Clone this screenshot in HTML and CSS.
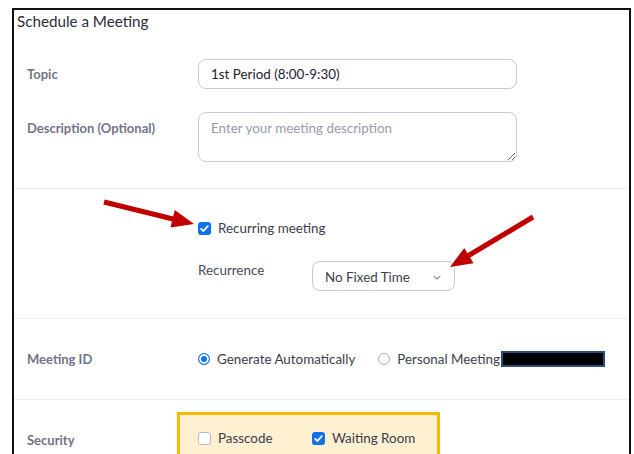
FILE: index.html
```html
<!DOCTYPE html>
<html lang="en">
<head>
<meta charset="utf-8">
<title>Schedule a Meeting</title>
<link rel="stylesheet" href="styles.css">
</head>
<body>
<div class="panel">
  <div class="title">Schedule a Meeting</div>

  <div class="section section-basic">
    <div class="row row-center">
      <div class="label">Topic</div>
      <div class="value"><input class="field" type="text" value="1st Period (8:00-9:30)"></div>
    </div>
    <div class="row row-top row-desc">
      <div class="label label-desc">Description (Optional)</div>
      <div class="value"><textarea class="field area" placeholder="Enter your meeting description"></textarea></div>
    </div>
  </div>

  <div class="section section-recur">
    <div class="row row-center">
      <div class="label"></div>
      <div class="value">
        <label class="check">
          <span class="box box-on"><svg viewBox="0 0 13 13" width="13" height="13"><path d="M3.2 6.8 L5.5 9 L9.8 4.2" fill="none" stroke="#fff" stroke-width="1.8" stroke-linecap="round" stroke-linejoin="round"/></svg></span>
          <span class="text">Recurring meeting</span>
        </label>
      </div>
    </div>
    <div class="row row-center row-recurrence">
      <div class="label"></div>
      <div class="value recur">
        <span class="sub-label">Recurrence</span>
        <div class="select">
          <span>No Fixed Time</span>
          <svg class="chev" viewBox="0 0 8 5" width="8" height="5"><path d="M0.7 0.8 L4 4 L7.3 0.8" fill="none" stroke="#8a8a99" stroke-width="1.1"/></svg>
        </div>
      </div>
    </div>
  </div>

  <div class="section section-id">
    <div class="row row-center">
      <div class="label">Meeting ID</div>
      <div class="value radios">
        <label class="radio-opt">
          <span class="radio radio-on"></span>
          <span class="text">Generate Automatically</span>
        </label>
        <label class="radio-opt">
          <span class="radio"></span>
          <span class="text">Personal Meeting</span><span class="masked"></span>
        </label>
      </div>
    </div>
  </div>

  <div class="section section-security">
    <div class="row row-center row-security">
      <div class="label">Security</div>
      <div class="value highlight">
        <label class="check">
          <span class="box"></span>
          <span class="text">Passcode</span>
        </label>
        <label class="check check-wait">
          <span class="box box-on"><svg viewBox="0 0 13 13" width="13" height="13"><path d="M3.2 6.8 L5.5 9 L9.8 4.2" fill="none" stroke="#fff" stroke-width="1.8" stroke-linecap="round" stroke-linejoin="round"/></svg></span>
          <span class="text">Waiting Room</span>
        </label>
      </div>
    </div>
  </div>
</div>

<svg class="arrows" width="634" height="454" viewBox="0 0 634 454">
  <line x1="104" y1="202" x2="175" y2="219.5" stroke="#c00000" stroke-width="5"/>
  <polygon points="194,224 170.5,227.5 174.7,210.1" fill="#c00000"/>
  <line x1="533" y1="217" x2="467" y2="256.5" stroke="#c00000" stroke-width="5"/>
  <polygon points="450,267 464.3,247.9 473.5,263.3" fill="#c00000"/>
</svg>
</body>
</html>
```

FILE: styles.css
```css
html, body {
  margin: 0;
  padding: 0;
  background: #ffffff;
  overflow: hidden;
}

body {
  position: relative;
  width: 634px;
  height: 454px;
  font-family: Lato, "Open Sans", "Liberation Sans", sans-serif;
  font-size: 13.4px;
  color: #3d3d4e;
}

.panel {
  margin: 8px 0 0 12px;
  width: 615px;
  border: 2px solid #111111;
  border-bottom: none;
  background: #ffffff;
}

.title {
  padding: 1px 3px 0;
  line-height: 20px;
  font-size: 15.2px;
  color: #2d2d3a;
}

.section {
  border-bottom: 1px solid #ececf1;
}

.row {
  display: grid;
  grid-template-columns: 171px 1fr;
  padding-left: 13px;
}

.row-center { align-items: center; }
.row-top { align-items: start; }

.label {
  font-weight: bold;
  color: #747487;
  line-height: 18px;
  font-size: 13px;
}

.value {
  display: flex;
  align-items: center;
}

/* topic + description */
.section-basic {
  padding: 28px 0 26px;
}

.row-desc {
  margin-top: 23px;
}

.label-desc {
  padding-top: 7px;
}

.field {
  box-sizing: border-box;
  width: 319px;
  height: 30px;
  border: 1px solid #c9c9d6;
  border-radius: 8px;
  padding: 0 12px;
  font-family: inherit;
  font-size: 13.4px;
  color: #232333;
  background: #ffffff;
  outline: none;
}

.area {
  height: 50px;
  padding: 6px 12px;
  line-height: 18px;
  resize: vertical;
  display: block;
}

.area::placeholder {
  color: #9a9aa8;
}

/* recurring */
.section-recur {
  padding: 29px 0 27px;
}

.row-recurrence {
  margin-top: 23px;
}

.check {
  display: inline-flex;
  align-items: center;
  gap: 7px;
  line-height: 20px;
  color: #3d3d4e;
}

.box {
  box-sizing: border-box;
  width: 13px;
  height: 13px;
  border-radius: 3px;
  border: 1px solid #b9b9c4;
  background: #ffffff;
  display: inline-flex;
}

.box-on {
  border: none;
  background: #0e72ed;
}

.sub-label {
  width: 114px;
  align-self: flex-start;
  margin-top: -1px;
  line-height: 20px;
  color: #4a4a5a;
}

.select {
  box-sizing: border-box;
  width: 143px;
  height: 30px;
  border: 1px solid #c9c9d6;
  border-radius: 8px;
  padding: 1px 13px 0 12px;
  display: flex;
  align-items: center;
  justify-content: space-between;
  color: #3d3d4e;
}

.chev {
  margin-top: 1px;
}

/* meeting id */
.section-id {
  padding: 30px 0 30px;
}

.radios {
  gap: 23px;
  line-height: 20px;
}

.radio-opt {
  display: inline-flex;
  align-items: center;
  gap: 7px;
  color: #3d3d4e;
}

.radio {
  box-sizing: border-box;
  width: 12px;
  height: 12px;
  border-radius: 50%;
  border: 1px solid #a9a9b5;
  background: #ffffff;
}

.radio-on {
  border: 1.5px solid #0e72ed;
  box-shadow: inset 0 0 0 2px #ffffff;
  background: #0e72ed;
}

.masked {
  width: 100px;
  height: 12px;
  margin-left: -6px;
  background: #000000;
  border: 2px solid #2c4a7c;
}

/* security */
.section-security {
  padding-top: 12px;
  border-bottom: none;
}

.row-security {
  grid-template-columns: 150px auto;
  justify-content: start;
}

.highlight {
  width: 221px;
  padding: 13px 18px 20px;
  background: #fef1d2;
  border: 3px solid #f8b700;
  border-bottom: none;
}

.highlight .check {
  width: 114px;
}

.highlight .check-wait {
  width: auto;
}

/* annotation arrows */
.arrows {
  position: absolute;
  left: 0;
  top: 0;
  pointer-events: none;
}
```
